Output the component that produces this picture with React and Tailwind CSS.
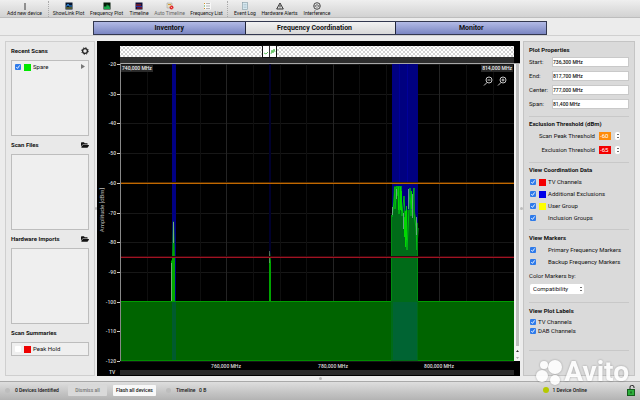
import React, { useState } from 'react';
import { FaFolderOpen } from 'react-icons/fa';

const tools = [
    { label: 'Add new device', icon: 'antenna', width: 'w-[45px]' },
    { label: 'ShowLink Plot', icon: 'showlink', width: 'w-[37px]' },
    { label: 'Frequency Plot', icon: 'frequency', width: 'w-[39px]' },
    { label: 'Timeline', icon: 'timeline', width: 'w-[26px]' },
    { label: 'Auto Timeline', icon: 'auto', width: 'w-[35px]', muted: true },
    { label: 'Frequency List', icon: 'list', width: 'w-[39px]' },
    { label: 'Event Log', icon: 'log', width: 'w-[32px]' },
    { label: 'Hardware Alerts', icon: 'alert', width: 'w-[37px]' },
    { label: 'Interference', icon: 'interference', width: 'w-[38px]' },
];

const ToolIcon = ({ name }) => {
    const art = {
        antenna: (
            <>
                <path d="M4 1v6" stroke="#555" strokeWidth="1.2" />
                <path d="M3 7.500h2" stroke="#777" strokeWidth="0.8" />
            </>
        ),
        showlink: (
            <>
                <rect x="0.5" y="0.5" width="7" height="7" fill="#07152d" />
                <path d="M1 4h1l1-2 1 2h3" stroke="#2a8be0" fill="none" />
                <path d="M1 6h6" stroke="#c5c43a" strokeWidth="0.8" />
            </>
        ),
        frequency: (
            <>
                <rect x="0.5" y="0.5" width="7" height="7" fill="#041a08" />
                <path d="M1 7V5l1-1 1 1 1-3 1 2 1-1 1 3v1z" fill="#17a84a" />
            </>
        ),
        timeline: (
            <>
                <rect x="0.5" y="0.5" width="7" height="7" fill="#11103a" />
                <path d="M1 3h5M2 6h5" stroke="#c02323" />
                <path d="M1 4.500h6" stroke="#2431a8" />
            </>
        ),
        auto: (
            <>
                <path d="M1 1h5v5H1z" fill="#e4dfc6" stroke="#999" strokeWidth="0.5" />
                <path d="M2 2.500h3" stroke="#d49a35" />
                <circle cx="5.500" cy="5.500" r="2" fill="#e02b2b" />
                <path d="m4.700 4.700 1.600 1.600" stroke="#fff" strokeWidth="0.6" />
            </>
        ),
        list: (
            <>
                <rect x="1" y="0.5" width="7" height="7" fill="#f8f8f8" />
                <path d="M1 1.500h1M1 6.500h1" stroke="#d88921" />
                <path d="M1 4h1" stroke="#38a33b" />
                <path d="M3 1.500h4M3 4h4M3 6.500h4" stroke="#999" strokeWidth="0.7" />
            </>
        ),
        log: (
            <>
                <rect x="1.500" y="0.5" width="5" height="7" fill="#d6e8ef" stroke="#829aa4" strokeWidth="0.6" />
                <path d="M2.500 2.500h3M2.500 4h3M2.500 5.500h3" stroke="#9db5c0" strokeWidth="0.5" />
            </>
        ),
        alert: <path d="M4 1 7.300 7H.7zM4 3v2M4 5.600v.7" fill="none" stroke="#222" strokeWidth="0.9" />,
        interference: (
            <>
                <circle cx="4" cy="4" r="3.300" fill="none" stroke="#222" strokeWidth="0.8" />
                <path d="M4 2v2.500M4 5.300v.8M2.200 3v2M5.800 3v2" stroke="#222" strokeWidth="0.7" />
            </>
        ),
    };
    return <svg viewBox="0 0 8 8" className="h-2 w-2" aria-hidden="true">{art[name]}</svg>;
};

const Toolbar = () => (
    <header className="flex h-[18px] items-center border-b border-[#bdbdbd] bg-gradient-to-b from-[#efefef] to-[#d2d2d2] pl-[2px]">
        {tools.map((tool, i) => (
            <React.Fragment key={tool.label}>
                <button type="button" className={`flex shrink-0 flex-col items-center text-[5px] leading-[6px] whitespace-nowrap ${tool.width} ${tool.muted ? 'text-[#666]' : 'text-[#111]'}`}>
                    <ToolIcon name={tool.icon} />
                    {tool.label}
                </button>
                {(i === 0 || i === 5) && <span className="mx-[1px] h-4 border-l border-dotted border-[#aaa]" />}
            </React.Fragment>
        ))}
    </header>
);

const tabs = ['Inventory', 'Frequency Coordination', 'Monitor'];

const Tabs = () => {
    const [active, setActive] = useState('Frequency Coordination');
    return (
        <nav className="mb-[5px] flex h-[18px] justify-center border-b border-[#d0d0d0] pt-[3px]">
            <div className="grid w-[71%] grid-cols-3 border border-[#33384f]">
                {tabs.map((tab) => (
                    <button
                        key={tab}
                        type="button"
                        onClick={() => setActive(tab)}
                        className={`border-[#22263c] text-[7px] leading-[12px] font-bold not-first:border-l ${active === tab ? 'bg-gradient-to-b from-[#f2f2f2] to-[#d8d8d8] pr-3' : 'bg-gradient-to-b from-[#b3bbe6] to-[#7b86c2]'}`}
                    >
                        {tab}
                    </button>
                ))}
            </div>
        </nav>
    );
};

const Check = ({ label, color, defaultChecked = true, swatch = true, tall = true }) => (
    <label className={`flex items-center gap-[2px] ${tall ? 'h-3' : 'h-[9px]'}`}>
        <input
            type="checkbox"
            defaultChecked={defaultChecked}
            className="peer h-[6px] w-[6px] shrink-0 appearance-none rounded-[1px] bg-white checked:bg-[#2f7bea]"
        />
        <svg viewBox="0 0 6 6" className="-ml-2 hidden h-[6px] w-[6px] shrink-0 peer-checked:block" aria-hidden="true">
            <path d="m1.300 3.100 1.200 1.300 2.200-3" fill="none" stroke="#fff" strokeWidth="0.9" />
        </svg>
        {swatch && <span className="ml-[1px] h-[7px] w-[7px] shrink-0" style={{ backgroundColor: color }} />}
        <span className="whitespace-nowrap">{label}</span>
    </label>
);

const PanelTitle = ({ children, icon }) => (
    <div className="flex h-[18px] items-center justify-between">
        <h2 className="font-bold">{children}</h2>
        {icon}
    </div>
);

const Gear = () => (
    <svg viewBox="0 0 8 8" className="h-2 w-2">
        <circle cx="4" cy="4" r="2.400" fill="none" stroke="#222" strokeWidth="1.300" />
        <circle cx="4" cy="4" r="3.300" fill="none" stroke="#222" strokeWidth="1" strokeDasharray="1.300 1.292" />
    </svg>
);

const FolderButton = ({ label }) => (
    <button type="button" aria-label={label}><FaFolderOpen className="h-2 w-2" /></button>
);

const ScansPanel = () => (
    <aside className="w-[90px] shrink-0 border border-[#cfcfcf] bg-[#e9e9e9] px-[5px]">
        <PanelTitle icon={<button type="button" aria-label="Scan settings"><Gear /></button>}>Recent Scans</PanelTitle>
        <div className="flex h-[76px] items-start justify-between border border-[#bdbdbd] bg-[#efefef] px-[3px]">
            <Check label="Spare" color="#00e800" />
            <svg viewBox="0 0 4 5" className="mt-[3px] h-[5px] w-1"><path d="M0 0v5l4-2.500z" fill="#777" /></svg>
        </div>
        <PanelTitle icon={<FolderButton label="Open scan file" />}>Scan Files</PanelTitle>
        <div className="h-[76px] border border-[#bdbdbd] bg-[#efefef]" />
        <PanelTitle icon={<FolderButton label="Open hardware import" />}>Hardware Imports</PanelTitle>
        <div className="h-[76px] border border-[#bdbdbd] bg-[#efefef]" />
        <PanelTitle>Scan Summaries</PanelTitle>
        <div className="border border-[#bdbdbd] bg-[#efefef] px-[3px]">
            <Check label="Peak Hold" color="#ee0000" defaultChecked={false} />
        </div>
    </aside>
);

const levels = [-20, -30, -40, -50, -60, -70, -80, -90, -100, -110, -120];
const freqs = [
    { x: 129, label: '760,000 MHz' },
    { x: 236, label: '780,000 MHz' },
    { x: 342, label: '800,000 MHz' },
];
const levelY = (db) => 23 + Math.round((-20 - db) * 2.97);

const SpectrumPlot = () => (
    <main className="min-w-0 flex-1 bg-black">
        <svg viewBox="0 0 423 335" className="block w-full" fontFamily="Roboto, sans-serif" fontSize="5" fontWeight="500" role="img" aria-label="Frequency spectrum">
            <defs>
                <pattern id="checker" width="4" height="4" patternUnits="userSpaceOnUse">
                    <rect width="4" height="4" fill="#fff" />
                    <path d="M0 0h2v2H0zM2 2h2v2H2z" fill="#d2d2d2" />
                </pattern>
            </defs>
            <rect width="423" height="335" fill="#000" />

            {/* overview strip */}
            <rect x="23" y="5" width="394" height="11" fill="url(#checker)" />
            <rect x="23" y="16" width="394" height="6" fill="#2d2d2d" />
            <rect x="165.500" y="4.500" width="14" height="12" fill="#fff" stroke="#111" />
            <path d="M172.500 5v11" stroke="#333" />
            <path d="m167 12 2 1 2-2M174 13l1-4 1 3 1-4 1 3" fill="none" stroke="#62c162" />
            <path d="M23 22.500h400" stroke="#a8a8a8" />

            {/* grid */}
            {levels.map((db) => (
                <path key={db} d={`M23 ${levelY(db) + 0.5}h394`} stroke="#171717" />
            ))}
            {[50, 76, 103, 129, 156, 183, 209, 236, 262, 289, 316, 342, 369, 396].map((x, i) => (
                <path key={x} d={`M${x + 0.5} 23v297`} stroke={i % 4 === 3 ? '#242424' : '#0f0f0f'} />
            ))}

            {/* additional exclusions */}
            <rect x="75" y="23" width="4" height="297" fill="#000083" />
            <rect x="172" y="23" width="2" height="297" fill="#00002c" />
            <rect x="295" y="23" width="26" height="297" fill="#000080" />
            <path d="M302.500 23v119M310.500 23v119" stroke="#00009a" />

            {/* scan trace */}
            <rect x="23" y="260" width="394" height="60" fill="#006400" />
            <path d="M23 260.500h394" stroke="#009c00" />
            <path d="M23 319.500h394" stroke="#008c00" />
            <path d="M74 260v-40l1-1 1-39 1 1 1 39v40z" fill="#00a800" />
            <path d="M74.500 260v-38M76.500 202v-21" stroke="#8bb88b" strokeWidth="0.8" />
            <path d="M172 260v-40l1-9 1 10v39z" fill="#00a400" />
            <path d="M172.500 222v-12" stroke="#82ad82" strokeWidth="0.6" />
            <path d="M294 320V220l1-44 2-31h7l1 20 2 6 2-2h7l1-22 1 24 3 14v135z" fill="#006b18" />
            <rect x="75" y="261" width="4" height="58" fill="#005b2e" />
            <rect x="296" y="261" width="24" height="58" fill="#006433" />
            <path d="m295 176 2-15 1-15v22l2-23v10l2-10v28l2-28 1 30 2-20 2 36 1 18 3-62 1 28 3-28v26l2 14 1 22 1-22" fill="none" stroke="#00bf13" />
            <path d="M301.500 146v23M303.500 146v23M304.500 150v20M307.500 176v20M308.500 170v36M309.500 165v34M314.500 150v18" stroke="#00d800" />
            <path d="M295.500 166v8M299.500 148v10M306.500 172v16M311.500 148v20M315.500 153v24M319.500 176v18" stroke="#7daf9b" strokeWidth="0.8" />
            <path d="M294.500 260v-86M320.500 260v-78" stroke="#008c10" />

            {/* thresholds */}
            <rect x="23" y="141" width="394" height="1" fill="#4d2900" />
            <rect x="23" y="142" width="394" height="1" fill="#c06800" />
            <rect x="23" y="215" width="394" height="1" fill="#38060b" />
            <rect x="23" y="216" width="394" height="1" fill="#a01222" />

            {/* axes */}
            <path d="M23.500 22v298" stroke="#888" />
            {levels.map((db) => (
                <g key={db}>
                    <path d={`M20 ${levelY(db) + 0.5}h3`} stroke="#ccc" />
                    <text x="19" y={levelY(db) + 2} textAnchor="end" fill="#ddd">{db}</text>
                </g>
            ))}
            <text transform="translate(7 169) rotate(-90)" textAnchor="middle" fill="#bbb" fontSize="6" fontWeight="400">Amplitude [dBm]</text>
            <rect x="24" y="24" width="32" height="7" fill="#2a2a2a" />
            <text x="25" y="29" fill="#eee">740,000 MHz</text>
            <rect x="384" y="24" width="32" height="7" fill="#2a2a2a" />
            <text x="415" y="29" textAnchor="end" fill="#eee">814,000 MHz</text>
            {freqs.map((f) => (
                <text key={f.label} x={f.x} y="327" textAnchor="middle" fill="#ddd">{f.label}</text>
            ))}
            <rect x="23" y="329" width="394" height="5" fill="#292929" />
            <text x="12" y="333" fill="#ddd">TV</text>

            {/* zoom tools */}
            <g fill="none" stroke="#ddd" strokeWidth="0.9">
                <circle cx="392" cy="39" r="3" />
                <path d="m390 41.500-3 3M390.500 39h3" />
                <circle cx="406" cy="39" r="3" />
                <path d="m404 41.500-3 3M404.500 39h3M406 37.500v3" />
            </g>

            {/* scrollbar */}
            <rect x="417" y="23" width="6" height="297" fill="#f4f4f4" />
            <rect x="419" y="23" width="3" height="282" fill="#bfbfbf" />
            <path d="m419 311 1.500-2 1.500 2z" fill="#333" />
            <path d="m419 316 1.500 2 1.500-2z" fill="#aaa" />
        </svg>
    </main>
);

const fields = [
    ['Start:', '736,300 MHz'],
    ['End:', '817,700 MHz'],
    ['Center:', '777,000 MHz'],
    ['Span:', '81,400 MHz'],
];

const Stepper = () => (
    <span className="flex h-2 w-[5px] items-center justify-center rounded-[2px] bg-white">
        <svg viewBox="0 0 4 8" className="h-2 w-1"><path d="m1 3 1-1 1 1M1 5l1 1 1-1" fill="none" stroke="#333" strokeWidth="0.7" /></svg>
    </span>
);

const Threshold = ({ label, value, color }) => (
    <label className="flex h-[14px] items-center justify-end gap-[4px] pr-[9px]">
        {label}
        <input defaultValue={value} className={`h-2 w-3 pl-[1px] text-white ${color}`} />
        <Stepper />
    </label>
);

const PropertiesPanel = () => (
    <aside className="w-[112px] shrink-0 border border-[#c4c4c4] bg-[#dadada] px-[5px]">
        <section className="border-b border-[#c8c8c8] pb-[5px]">
            <h2 className="pt-[4px] pb-[1px] leading-[8px] font-bold">Plot Properties</h2>
            {fields.map(([name, value]) => (
                <label key={name} className="flex h-[14px] items-center">
                    <span className="w-[23px]">{name}</span>
                    <input defaultValue={value} className="h-[10px] min-w-0 flex-1 border border-[#c9c9c9] bg-white text-[5px] font-medium" />
                </label>
            ))}
        </section>
        <section className="border-b border-[#c8c8c8] pt-[3px] pb-[5px]">
            <h2 className="pb-[1px] leading-[8px] font-bold">Exclusion Threshold (dBm)</h2>
            <Threshold label="Scan Peak Threshold" value="-60" color="bg-[#ff8c0a]" />
            <Threshold label="Exclusion Threshold" value="-65" color="bg-[#f40000]" />
        </section>
        <section className="border-b border-[#c8c8c8] pt-[3px] pb-[5px]">
            <h2 className="pb-[2px] leading-[8px] font-bold">View Coordination Data</h2>
            <div className="pl-[1px]">
                <Check label="TV Channels" color="#f40000" />
                <Check label="Additional Exclusions" color="#0000e8" />
                <Check label="User Group" color="#ffff00" />
                <Check label="Inclusion Groups" color="transparent" />
            </div>
        </section>
        <section className="border-b border-[#c8c8c8] pt-[4px] pb-2">
            <h2 className="pb-[2px] leading-[8px] font-bold">View Markers</h2>
            <div className="pl-[1px]">
                <Check label="Primary Frequency Markers" color="transparent" />
                <Check label="Backup Frequency Markers" color="transparent" />
            </div>
            <label className="block pt-[4px]">
                <span className="block pb-[4px] leading-[8px]">Color Markers by:</span>
                <span className="ml-[1px] flex h-[10px] w-[54px] items-center rounded-[2px] bg-white pr-[1px]">
                    <select className="min-w-0 flex-1 appearance-none pl-[3px]">
                        <option>Compatibility</option>
                    </select>
                    <Stepper />
                </span>
            </label>
        </section>
        <section className="border-b border-[#c8c8c8] pt-[4px] pb-[15px]">
            <h2 className="pb-[2px] leading-[8px] font-bold">View Plot Labels</h2>
            <div className="pl-[1px]">
                <Check label="TV Channels" swatch={false} tall={false} />
                <Check label="DAB Channels" swatch={false} tall={false} />
            </div>
        </section>
    </aside>
);

const Splitter = ({ width }) => (
    <div className={`flex shrink-0 items-center justify-center ${width}`}>
        <span className="h-[3px] w-full rounded-full bg-[#bcbcbc]" />
    </div>
);

const StatusBar = () => (
    <footer className="mt-auto flex h-[19px] items-center border-t border-[#a9a9a9] bg-gradient-to-b from-[#dedede] to-[#b3b3b3] pr-[4px] pb-[2px] pl-[5px] text-[5px] font-medium">
        <span className="h-[5px] w-[5px] rounded-full bg-[#bdbdbd]" />
        <span className="w-[58px] pl-[5px] whitespace-nowrap">0 Devices Identified</span>
        <button type="button" className="h-[11px] w-[39px] rounded-[1px] bg-[#d9d9d9] text-[#777]">Dismiss all</button>
        <button type="button" className="ml-[6px] h-[11px] w-[43px] rounded-[1px] bg-[#f8f8f8] whitespace-nowrap">Flash all devices</button>
        <span className="ml-[10px] h-[5px] w-[5px] rounded-full bg-[#bdbdbd]" />
        <span className="pl-[5px]">Timeline&nbsp;&nbsp; 0 B</span>
        <span className="ml-auto h-[6px] w-[6px] rounded-full bg-[#b5c900]" />
        <span className="pr-[40px] pl-[3px]">1 Device Online</span>
        <svg viewBox="0 0 9 11" className="h-[11px] w-[9px]">
            <path d="M3 5V2.500a2 2 0 0 1 4-.5v1" fill="none" stroke="#222" />
            <rect x="0.5" y="4.500" width="7" height="6" fill="#2cae3b" stroke="#155b1c" />
            <path d="M4 6.500v2" stroke="#0a360e" />
        </svg>
    </footer>
);

const Watermark = () => (
    <div className="pointer-events-none absolute right-[11px] bottom-[15px] flex items-center gap-[1px] text-white opacity-90 drop-shadow-[0_0_1px_rgba(0,0,0,0.3)]">
        <svg viewBox="0 0 28 26" className="h-[26px] w-[28px]" fill="currentColor">
            <circle cx="9" cy="6" r="4" />
            <circle cx="20" cy="8" r="7" />
            <circle cx="7" cy="17" r="6" />
            <circle cx="20" cy="21" r="5" />
        </svg>
        <span className="text-[28px] leading-[24px] font-bold">Avito</span>
    </div>
);

const App = () => (
    <div className="relative flex min-h-screen flex-col bg-[#ececec] font-['Roboto',sans-serif] text-[6px] leading-[8px] text-[#111]">
        <Toolbar />
        <Tabs />
        <div className="flex px-[5px]">
            <ScansPanel />
            <Splitter width="w-[2px]" />
            <SpectrumPlot />
            <Splitter width="w-[3px]" />
            <PropertiesPanel />
        </div>
        <div className="flex h-[5px] items-center justify-center">
            <span className="h-[3px] w-[3px] rounded-full bg-[#bcbcbc]" />
        </div>
        <StatusBar />
        <Watermark />
    </div>
);

export default App;
